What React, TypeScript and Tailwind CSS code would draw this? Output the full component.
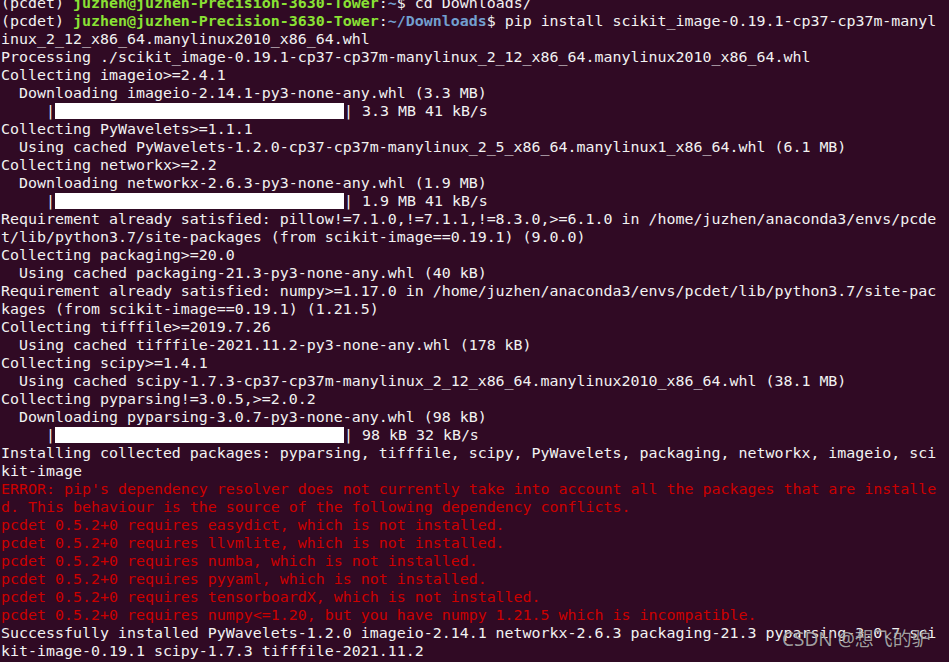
import React from 'react';

type Seg = { t: string; c?: 'g' | 'b' | 'r' | 'bar' };
type Line = Seg[];

const plain = (t: string): Line => [{ t }];
const red = (t: string): Line => [{ t, c: 'r' }];
const bar = (tail: string): Line => [{ t: '     |' }, { t: '', c: 'bar' }, { t: '| ' + tail }];

const lines: Line[] = [
  [{ t: '(pcdet) ' }, { t: 'juzhen@juzhen-Precision-3630-Tower', c: 'g' }, { t: ':' }, { t: '~', c: 'b' }, { t: '$ cd Downloads/' }],
  [
    { t: '(pcdet) ' },
    { t: 'juzhen@juzhen-Precision-3630-Tower', c: 'g' },
    { t: ':' },
    { t: '~/Downloads', c: 'b' },
    { t: '$ pip install scikit_image-0.19.1-cp37-cp37m-manyl' },
  ],
  plain('inux_2_12_x86_64.manylinux2010_x86_64.whl'),
  plain('Processing ./scikit_image-0.19.1-cp37-cp37m-manylinux_2_12_x86_64.manylinux2010_x86_64.whl'),
  plain('Collecting imageio>=2.4.1'),
  plain('  Downloading imageio-2.14.1-py3-none-any.whl (3.3 MB)'),
  bar('3.3 MB 41 kB/s'),
  plain('Collecting PyWavelets>=1.1.1'),
  plain('  Using cached PyWavelets-1.2.0-cp37-cp37m-manylinux_2_5_x86_64.manylinux1_x86_64.whl (6.1 MB)'),
  plain('Collecting networkx>=2.2'),
  plain('  Downloading networkx-2.6.3-py3-none-any.whl (1.9 MB)'),
  bar('1.9 MB 41 kB/s'),
  plain('Requirement already satisfied: pillow!=7.1.0,!=7.1.1,!=8.3.0,>=6.1.0 in /home/juzhen/anaconda3/envs/pcde'),
  plain('t/lib/python3.7/site-packages (from scikit-image==0.19.1) (9.0.0)'),
  plain('Collecting packaging>=20.0'),
  plain('  Using cached packaging-21.3-py3-none-any.whl (40 kB)'),
  plain('Requirement already satisfied: numpy>=1.17.0 in /home/juzhen/anaconda3/envs/pcdet/lib/python3.7/site-pac'),
  plain('kages (from scikit-image==0.19.1) (1.21.5)'),
  plain('Collecting tifffile>=2019.7.26'),
  plain('  Using cached tifffile-2021.11.2-py3-none-any.whl (178 kB)'),
  plain('Collecting scipy>=1.4.1'),
  plain('  Using cached scipy-1.7.3-cp37-cp37m-manylinux_2_12_x86_64.manylinux2010_x86_64.whl (38.1 MB)'),
  plain('Collecting pyparsing!=3.0.5,>=2.0.2'),
  plain('  Downloading pyparsing-3.0.7-py3-none-any.whl (98 kB)'),
  bar('98 kB 32 kB/s'),
  plain('Installing collected packages: pyparsing, tifffile, scipy, PyWavelets, packaging, networkx, imageio, sci'),
  plain('kit-image'),
  red("ERROR: pip's dependency resolver does not currently take into account all the packages that are installe"),
  red('d. This behaviour is the source of the following dependency conflicts.'),
  red('pcdet 0.5.2+0 requires easydict, which is not installed.'),
  red('pcdet 0.5.2+0 requires llvmlite, which is not installed.'),
  red('pcdet 0.5.2+0 requires numba, which is not installed.'),
  red('pcdet 0.5.2+0 requires pyyaml, which is not installed.'),
  red('pcdet 0.5.2+0 requires tensorboardX, which is not installed.'),
  red('pcdet 0.5.2+0 requires numpy<=1.20, but you have numpy 1.21.5 which is incompatible.'),
  plain('Successfully installed PyWavelets-1.2.0 imageio-2.14.1 networkx-2.6.3 packaging-21.3 pyparsing-3.0.7 sci'),
  plain('kit-image-0.19.1 scipy-1.7.3 tifffile-2021.11.2'),
];

const Segment: React.FC<{ seg: Seg }> = ({ seg }) => {
  if (seg.c === 'bar') {
    return <span className="inline-block w-[289px] h-[16px] bg-white align-[-3px]" />;
  }
  if (seg.c === 'g') return <span className="font-bold text-[#8ae234]">{seg.t}</span>;
  if (seg.c === 'b') return <span className="font-bold text-[#729fcf]">{seg.t}</span>;
  if (seg.c === 'r') return <span className="text-[#cc0000]">{seg.t}</span>;
  return <span>{seg.t}</span>;
};

export default function App() {
  return (
    <div className="relative w-[949px] h-[662px] overflow-hidden bg-[#300a24]">
      <div className="-mt-[6px] pl-[1px] font-['DejaVu_Sans_Mono','Liberation_Mono',monospace] text-[14.95px] leading-[18px] text-[#f2f2f2] whitespace-pre">
        {lines.map((line, i) => (
          <div key={i} className="h-[18px]">
            {line.map((seg, j) => (
              <Segment key={j} seg={seg} />
            ))}
          </div>
        ))}
      </div>

      {/* CSDN watermark */}
      <div className="absolute left-[782px] top-[627px] font-['Noto_Sans','Noto_Sans_CJK_SC',sans-serif] text-[19px] leading-[24px] text-[#d0d0d0]/75 whitespace-nowrap [text-shadow:0_0_1px_rgba(0,0,0,0.6)]">
        CSDN @想飞的驴
      </div>
    </div>
  );
}
